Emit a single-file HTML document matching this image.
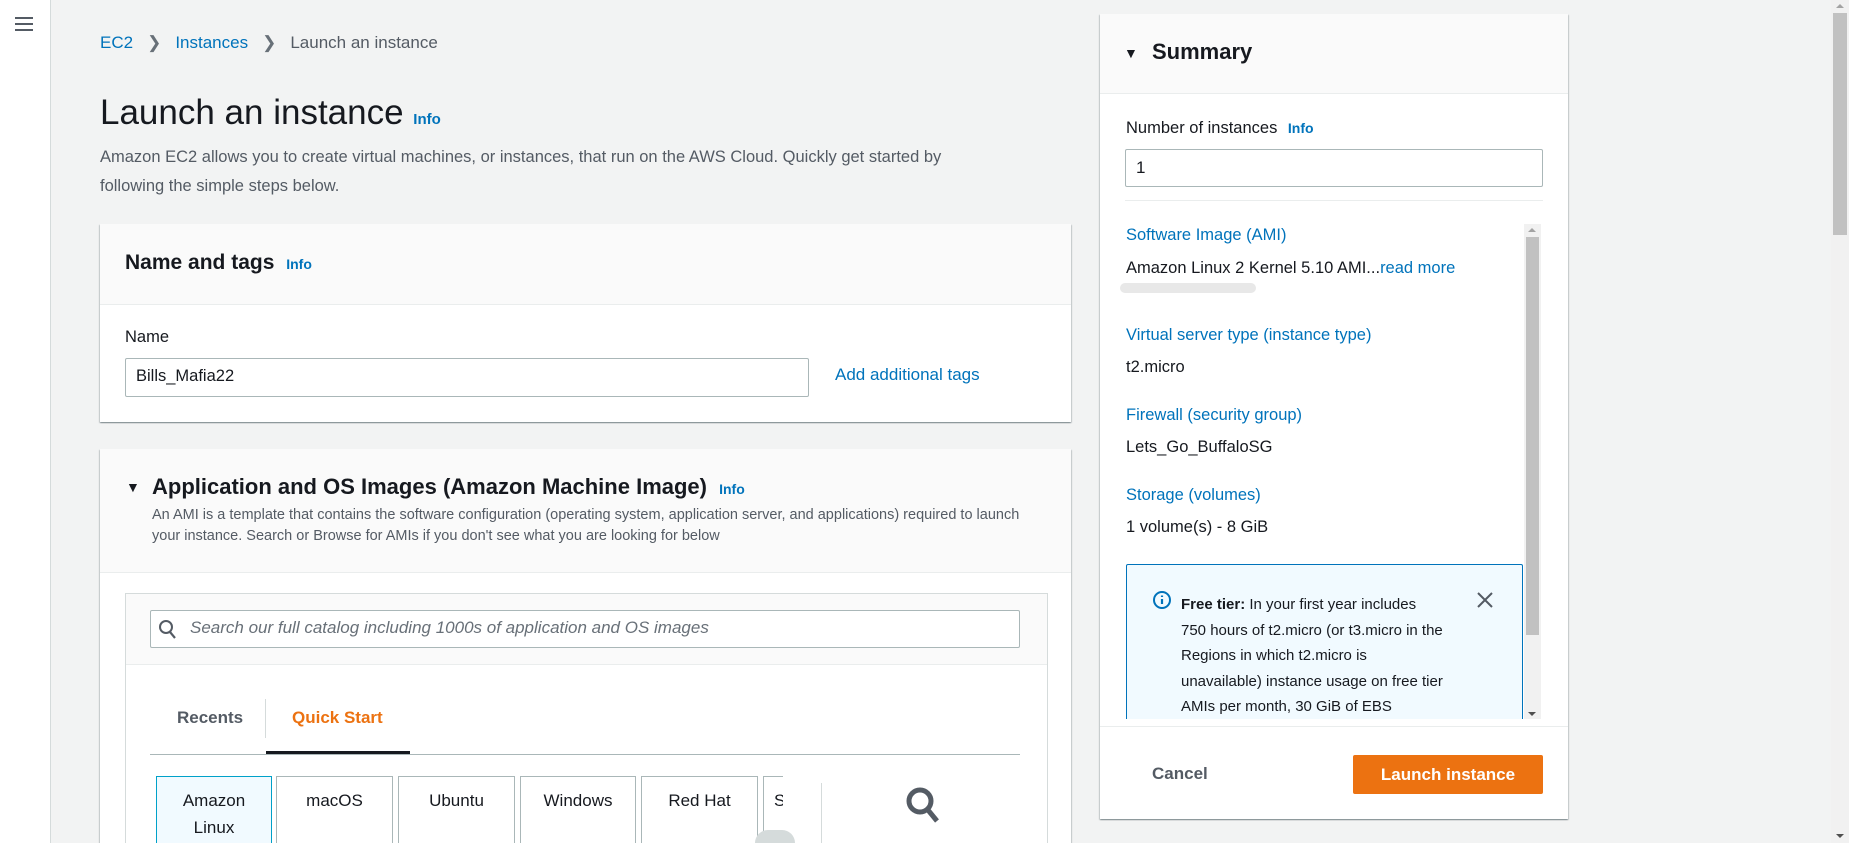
<!DOCTYPE html>
<html><head><meta charset="utf-8"><style>
*{box-sizing:border-box;margin:0;padding:0}
html{width:1849px;height:843px;overflow:hidden}
body{width:1849px;height:843px;overflow:hidden;background:#f2f3f3;font-family:"Liberation Sans",sans-serif;color:#16191f;position:relative}
.a{position:absolute;white-space:nowrap}
.blue{color:#0073bb}
.info{color:#0073bb;font-weight:bold;font-size:14px}
.card{position:absolute;background:#fff;box-shadow:0 1px 1px 0 rgba(0,28,36,.3),1px 1px 1px 0 rgba(0,28,36,.15),-1px 1px 1px 0 rgba(0,28,36,.15)}
.hd{position:absolute;left:0;right:0;top:0;background:#fafafa;border-bottom:1px solid #eaeded}
.inp{position:absolute;background:#fff;border:1px solid #aab7b8;border-radius:2px}
.tile{position:absolute;top:776px;height:67px;border:1px solid #aab7b8;border-bottom:none;background:#fff;text-align:center;font-size:17px;line-height:27px;padding-top:10px}
</style></head><body>
<div class="a" style="left:0;top:0;width:51px;height:843px;background:#fff;border-right:1px solid #d5dbdb"></div>
<div class="a" style="left:15px;top:17px;width:18px;height:2px;background:#545b64;box-shadow:0 6px 0 #545b64,0 12px 0 #545b64"></div>

<div class="a" style="left:100px;top:33px;font-size:17px"><span class="blue">EC2</span><span style="color:#687078;margin:0 14px">&#x276F;</span><span class="blue">Instances</span><span style="color:#687078;margin:0 14px">&#x276F;</span><span style="color:#545b64">Launch an instance</span></div>
<div class="a" style="left:100px;top:93px;font-size:35px">Launch an instance <span class="info" style="font-size:15px">Info</span></div>
<div class="a" style="left:100px;top:143px;font-size:16.5px;line-height:29px;color:#545b64;white-space:normal;width:895px">Amazon EC2 allows you to create virtual machines, or instances, that run on the AWS Cloud. Quickly get started by following the simple steps below.</div>

<div class="card" style="left:100px;top:224px;width:971px;height:198px">
 <div class="hd" style="height:81px"></div>
 <div class="a" style="left:25px;top:27px;font-size:21px;font-weight:bold">Name and tags <span class="info" style="font-size:14px;margin-left:6px">Info</span></div>
 <div class="a" style="left:25px;top:104px;font-size:16.5px">Name</div>
 <div class="inp" style="left:25px;top:134px;width:684px;height:39px"></div>
 <div class="a" style="left:36px;top:143px;font-size:16.5px">Bills_Mafia22</div>
 <div class="a blue" style="left:735px;top:141px;font-size:17px">Add additional tags</div>
</div>

<div class="card" style="left:100px;top:449px;width:971px;height:394px;overflow:hidden">
 <div class="hd" style="height:124px"></div>
 <div class="a" style="left:26px;top:30px;font-size:14px">&#9660;</div>
 <div class="a" style="left:52px;top:25px;font-size:22px;font-weight:bold">Application and OS Images (Amazon Machine Image) <span class="info" style="font-size:14px;margin-left:6px">Info</span></div>
 <div class="a" style="left:52px;top:56px;font-size:14.5px;line-height:21px;color:#545b64;white-space:normal;width:890px">An AMI is a template that contains the software configuration (operating system, application server, and applications) required to launch your instance. Search or Browse for AMIs if you don't see what you are looking for below</div>
 <div class="a" style="left:25px;top:144px;width:923px;height:260px;border:1px solid #d5dbdb;background:#fff">
  <div class="a" style="left:0;top:0;width:921px;height:71px;background:#fafafa;border-bottom:1px solid #eaeded"></div>
 </div>
</div>
<div class="inp" style="left:150px;top:610px;width:870px;height:38px"></div>
<svg class="a" style="left:158px;top:619px" width="20" height="22" viewBox="0 0 20 22"><circle cx="8" cy="8" r="6" fill="none" stroke="#545b64" stroke-width="2"/><path d="M12 13l5 6" stroke="#545b64" stroke-width="2.2"/></svg>
<div class="a" style="left:190px;top:618px;font-size:17px;font-style:italic;color:#687078">Search our full catalog including 1000s of application and OS images</div>
<div class="a" style="left:177px;top:708px;font-size:17px;font-weight:bold;color:#545b64">Recents</div>
<div class="a" style="left:265px;top:699px;width:1px;height:39px;background:#d5dbdb"></div>
<div class="a" style="left:292px;top:708px;font-size:17px;font-weight:bold;color:#ec7211">Quick Start</div>
<div class="a" style="left:150px;top:754px;width:870px;height:1px;background:#aab7b8"></div>
<div class="a" style="left:266px;top:751px;width:144px;height:3px;background:#16191f"></div>
<div class="tile" style="left:156px;width:116px;border-color:#00a1c9;background:#f1faff">Amazon<br>Linux</div>
<div class="tile" style="left:276px;width:117px">macOS</div>
<div class="tile" style="left:398px;width:117px">Ubuntu</div>
<div class="tile" style="left:520px;width:116px">Windows</div>
<div class="tile" style="left:641px;width:117px">Red Hat</div>
<div class="tile" style="left:763px;width:20px;overflow:hidden;border-right:none;text-align:left;padding-left:10px">S</div>
<div class="a" style="left:755px;top:830px;width:40px;height:13px;border-radius:20px 20px 0 0;background:#d5dbdb"></div>
<div class="a" style="left:821px;top:783px;width:1px;height:60px;background:#d5dbdb"></div>
<svg class="a" style="left:903px;top:785px" width="40" height="42" viewBox="0 0 40 42"><circle cx="17" cy="16" r="11" fill="none" stroke="#545b64" stroke-width="5"/><path d="M25 25l9 11" stroke="#545b64" stroke-width="5"/></svg>

<div class="card" style="left:1100px;top:14px;width:468px;height:805px">
 <div class="hd" style="height:80px"></div>
 <div class="a" style="left:24px;top:31px;font-size:14px">&#9660;</div>
 <div class="a" style="left:52px;top:25px;font-size:22px;font-weight:bold">Summary</div>
 <div class="a" style="left:26px;top:105px;font-size:16.5px">Number of instances <span class="info" style="font-size:14px;margin-left:6px">Info</span></div>
 <div class="inp" style="left:25px;top:135px;width:418px;height:38px"></div>
 <div class="a" style="left:36px;top:144px;font-size:17px">1</div>
 <div class="a" style="left:25px;top:186px;width:418px;height:1px;background:#eaeded"></div>
 <div class="a" style="left:0;top:210px;width:468px;height:495px;overflow:hidden">
  <div class="a blue" style="left:26px;top:2px;font-size:16.5px">Software Image (AMI)</div>
  <div class="a" style="left:26px;top:35px;font-size:16.5px">Amazon Linux 2 Kernel 5.10 AMI...<span class="blue">read more</span></div>
  <div class="a" style="left:20px;top:59px;width:136px;height:10px;border-radius:6px;background:#e8e8e8"></div>
  <div class="a blue" style="left:26px;top:102px;font-size:16.5px">Virtual server type (instance type)</div>
  <div class="a" style="left:26px;top:134px;font-size:16.5px">t2.micro</div>
  <div class="a blue" style="left:26px;top:182px;font-size:16.5px">Firewall (security group)</div>
  <div class="a" style="left:26px;top:214px;font-size:16.5px">Lets_Go_BuffaloSG</div>
  <div class="a blue" style="left:26px;top:262px;font-size:16.5px">Storage (volumes)</div>
  <div class="a" style="left:26px;top:294px;font-size:16.5px">1 volume(s) - 8 GiB</div>
  <div class="a" style="left:26px;top:340px;width:397px;height:200px;border:1px solid #0073bb;border-radius:2px;background:#f1faff"></div>
  <svg class="a" style="left:52px;top:366px" width="20" height="20" viewBox="0 0 20 20"><circle cx="10" cy="10" r="8" fill="none" stroke="#0073bb" stroke-width="2"/><path d="M10 9v5M10 5.5v1.5" stroke="#0073bb" stroke-width="2.2"/></svg>
  <div class="a" style="left:81px;top:368px;font-size:15px;line-height:25.5px;white-space:normal;width:262px"><b>Free tier:</b> In your first year includes 750 hours of t2.micro (or t3.micro in the Regions in which t2.micro is unavailable) instance usage on free tier AMIs per month, 30 GiB of EBS storage,</div>
  <svg class="a" style="left:376px;top:367px" width="18" height="18" viewBox="0 0 18 18"><path d="M2 2l14 14M16 2L2 16" stroke="#545b64" stroke-width="2"/></svg>
  <div class="a" style="left:424px;top:0;width:17px;height:495px;background:#f1f1f1"></div>
  <div class="a" style="left:426px;top:13px;width:13px;height:398px;background:#c1c1c1"></div>
  <div class="a" style="left:428px;top:4px;border:4px solid transparent;border-bottom:4px solid #a3a3a3;border-top:none"></div>
  <div class="a" style="left:428px;top:488px;border:4px solid transparent;border-top:4px solid #505050;border-bottom:none"></div>
 </div>
 <div class="a" style="left:0;top:712px;width:468px;height:1px;background:#eaeded"></div>
 <div class="a" style="left:52px;top:750px;font-size:17px;font-weight:bold;color:#545b64">Cancel</div>
 <div class="a" style="left:253px;top:741px;width:190px;height:39px;background:#ec7211;border-radius:2px;color:#fff;font-size:17px;font-weight:bold;text-align:center;line-height:39px">Launch instance</div>
</div>

<div class="a" style="left:1831px;top:0;width:18px;height:843px;background:#f1f1f1"></div>
<div class="a" style="left:1833px;top:13px;width:14px;height:222px;background:#c1c1c1"></div>
<div class="a" style="left:1836px;top:4px;border:4px solid transparent;border-bottom:4px solid #a3a3a3;border-top:none"></div>
<div class="a" style="left:1836px;top:834px;border:4px solid transparent;border-top:4px solid #505050;border-bottom:none"></div>
</body></html>
